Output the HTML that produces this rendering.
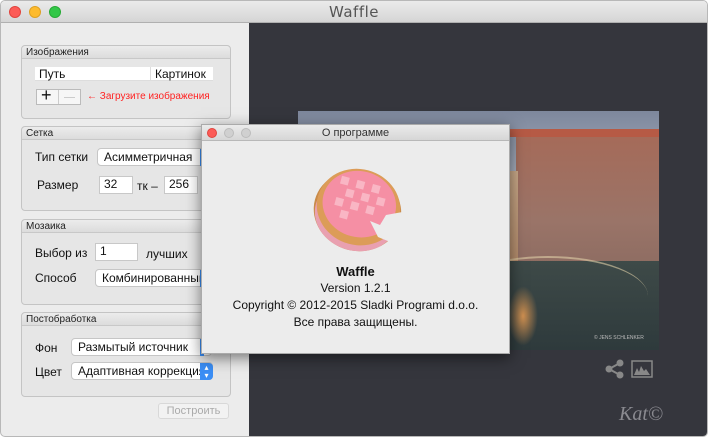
<!DOCTYPE html>
<html><head><meta charset="utf-8"><style>
*{margin:0;padding:0;box-sizing:border-box}
body{width:710px;height:439px;overflow:hidden;background:#fff;font-family:"Liberation Sans",sans-serif;position:relative}
.win{position:absolute;left:0;top:0;width:708px;height:437px;border:1px solid #b8b8b8;border-radius:5px;overflow:hidden;background:#ececec}
.tb{position:absolute;left:0;top:0;width:100%;height:22px;background:linear-gradient(#ebebeb,#d5d5d5);border-bottom:1px solid #b0b0b0;text-align:center;font:15px "DejaVu Sans",sans-serif;color:#555;line-height:22px;letter-spacing:.5px}
.dot{position:absolute;top:5px;width:12px;height:12px;border-radius:50%}
.dark{position:absolute;left:248px;top:22px;width:458px;height:414px;background:#35363d}
.grp{position:absolute;left:20px;width:210px;border:1px solid #c4c4c4;border-radius:4px;background:#e6e6e6}
.gh{height:13px;background:linear-gradient(#ececec,#dcdcdc);border-bottom:1px solid #c8c8c8;font-size:10px;line-height:13px;padding-left:4px;color:#222;border-radius:4px 4px 0 0}
.t{position:absolute;font-size:12px;color:#111;white-space:nowrap}
.in{position:absolute;background:#fff;border:1px solid #c8c8c8;font-size:12px;padding-left:4px;line-height:15px;height:18px;color:#111}
.pop{position:absolute;background:#fff;border:1px solid #c6c6c6;border-radius:4px;font-size:12px;padding-left:6px;line-height:16px;height:18px;color:#111;overflow:hidden;white-space:nowrap}
.dlg{position:absolute;left:200px;top:123px;width:309px;height:230px;background:#ececec;border:1px solid #aaa;box-shadow:0 4px 14px rgba(0,0,0,.5)}
.dtb{height:16px;background:linear-gradient(#ebebeb,#d6d6d6);border-bottom:1px solid #b8b8b8;text-align:center;font-size:11px;line-height:16px;color:#333}
.dd{position:absolute;top:3px;width:10px;height:10px;border-radius:50%;background:#d0d0d0;border:1px solid #bcbcbc}
.c{position:absolute;left:0;width:100%;text-align:center;font-size:12px;color:#111}
</style></head><body>
<div class="win">
<div class="tb">Waffle</div>
<div class="dot" style="left:8px;background:#fc5b57;border:1px solid #e0443e"></div>
<div class="dot" style="left:28px;background:#fdbb2e;border:1px solid #dea123"></div>
<div class="dot" style="left:48px;background:#33c748;border:1px solid #27aa35"></div>
<div class="dark">
 <div style="position:absolute;left:49px;top:88px;width:361px;height:239px;overflow:hidden;background:linear-gradient(180deg,#7d879c 0%,#a3abba 25%,#8c93a0 45%,#4a4f52 62%,#3b4a4c 100%)">
  <div style="position:absolute;left:218px;top:20px;width:143px;height:150px;background:linear-gradient(#a66a58,#9a7468 60%,#8a6a60)"></div>
  <div style="position:absolute;left:212px;top:18px;width:149px;height:8px;background:#b65a45"></div>
  <div style="position:absolute;left:175px;top:60px;width:45px;height:95px;background:linear-gradient(#c8a888,#b08868)"></div>
  <div style="position:absolute;left:145px;top:45px;width:35px;height:110px;background:linear-gradient(#c9a070,#9a6a3a)"></div>
  <div style="position:absolute;left:210px;top:150px;width:151px;height:89px;background:linear-gradient(#3e4a48,#2e3a3c)"></div>
  <div style="position:absolute;left:210px;top:175px;width:30px;height:60px;background:radial-gradient(#d09050,transparent 70%)"></div>
  <div style="position:absolute;left:150px;top:145px;width:200px;height:80px;border-top:2px solid #e0d0a8;border-radius:50% 50% 0 0;opacity:.6"></div>
  <div style="position:absolute;left:296px;top:224px;font-size:5px;color:#bbb">© JENS SCHLENKER</div>
 </div>
 <svg style="position:absolute;left:356px;top:336px" width="20" height="20" viewBox="0 0 20 20"><g stroke="#888" stroke-width="2" fill="#888"><line x1="4" y1="10" x2="15" y2="4"/><line x1="4" y1="10" x2="15" y2="16"/><circle cx="4" cy="10" r="2.5"/><circle cx="15" cy="4" r="2.5"/><circle cx="15" cy="16" r="2.5"/></g></svg>
 <svg style="position:absolute;left:382px;top:337px" width="22" height="18" viewBox="0 0 22 18"><rect x="1" y="1" width="20" height="16" fill="none" stroke="#888" stroke-width="1.5"/><path d="M3 15 L6 8 L8 12 L10 6 L13 11 L15 9 L19 15Z" fill="#888"/></svg>
 <div style="position:absolute;left:370px;top:380px;font:italic 20px 'Liberation Serif',serif;color:#8a8a90">Kat©</div>
</div>

<div class="grp" style="top:44px;height:74px"><div class="gh">Изображения</div></div>
<div style="position:absolute;left:34px;top:66px;width:178px;height:14px;background:#fff;border-bottom:1px solid #ddd"></div>
<div class="t" style="left:38px;top:66px">Путь</div>
<div style="position:absolute;left:149px;top:66px;width:1px;height:13px;background:#ddd"></div>
<div class="t" style="left:154px;top:66px">Картинок</div>
<div style="position:absolute;left:35px;top:88px;width:45px;height:16px;border:1px solid #bbb;background:#f6f6f6"></div>
<div style="position:absolute;left:57px;top:89px;width:1px;height:14px;background:#ccc"></div>
<div class="t" style="left:40px;top:84px;font-size:18px">+</div>
<div style="position:absolute;left:63px;top:96px;width:11px;height:1px;background:#ccc"></div>
<div class="t" style="left:86px;top:90px;font-size:10px;color:#f22">&#x2190; Загрузите изображения</div>

<div class="grp" style="top:125px;height:85px"><div class="gh">Сетка</div></div>
<div class="t" style="left:34px;top:149px">Тип сетки</div>
<div class="pop" style="left:96px;top:147px;width:110px">Асимметричная</div>
<div style="position:absolute;left:199px;top:148px;width:4px;height:17px;background:#3b8ef5"></div>
<div class="t" style="left:36px;top:177px">Размер</div>
<div class="in" style="left:98px;top:175px;width:34px">32</div>
<div class="t" style="left:136px;top:178px">тк –</div>
<div class="in" style="left:163px;top:175px;width:34px">256</div>

<div class="grp" style="top:218px;height:86px"><div class="gh">Мозаика</div></div>
<div class="t" style="left:34px;top:245px">Выбор из</div>
<div class="in" style="left:94px;top:242px;width:43px">1</div>
<div class="t" style="left:145px;top:246px">лучших</div>
<div class="t" style="left:34px;top:270px">Способ</div>
<div class="pop" style="left:94px;top:268px;width:112px">Комбинированный</div>
<div style="position:absolute;left:199px;top:269px;width:4px;height:17px;background:#3b8ef5"></div>

<div class="grp" style="top:311px;height:85px"><div class="gh">Постобработка</div></div>
<div class="t" style="left:34px;top:340px">Фон</div>
<div class="pop" style="left:70px;top:337px;width:141px">Размытый источник</div>
<div style="position:absolute;left:199px;top:338px;width:4px;height:17px;background:#3b8ef5"></div>
<div class="t" style="left:34px;top:364px">Цвет</div>
<div class="pop" style="left:70px;top:361px;width:142px">Адаптивная коррекция</div>
<div style="position:absolute;left:199px;top:362px;width:13px;height:17px;background:#3b8ef5;border-radius:0 4px 4px 0;color:#fff;font-size:8px;text-align:center;line-height:8px;padding-top:1px">▴<br>▾</div>
<div style="position:absolute;left:157px;top:402px;width:71px;height:16px;border:1px solid #d8d8d8;border-radius:3px;background:#f2f2f2;font-size:11px;color:#aaa;text-align:center;line-height:14px">Построить</div>

<div class="dlg">
 <div class="dtb">О программе</div>
 <div class="dd" style="left:5px;background:#fc5b57;border-color:#e0443e"></div>
 <div class="dd" style="left:22px"></div>
 <div class="dd" style="left:39px"></div>
 <svg style="position:absolute;left:106px;top:34px" width="100" height="100" viewBox="0 0 100 100">
  <g transform="rotate(15 50 50)">
  <ellipse cx="50" cy="52" rx="44" ry="40" fill="#c98a48"/>
  <ellipse cx="50" cy="56" rx="42" ry="36" fill="#e9a0b0"/>
  <ellipse cx="50" cy="48" rx="42" ry="38" fill="#dc9c58"/>
  <ellipse cx="50" cy="45" rx="37" ry="33" fill="#f58fa4"/>
  <g fill="#fbc0cc" opacity=".8"><rect x="26" y="22" width="8" height="8"/><rect x="42" y="22" width="8" height="8"/><rect x="58" y="22" width="8" height="8"/><rect x="34" y="33" width="8" height="8"/><rect x="50" y="33" width="8" height="8"/><rect x="66" y="33" width="8" height="8"/><rect x="26" y="44" width="8" height="8"/><rect x="42" y="44" width="8" height="8"/><rect x="58" y="44" width="8" height="8"/><rect x="34" y="55" width="8" height="8"/></g>
  </g>
  <path d="M100 52 L78 56 L72 66 L62 62 L70 78 L100 90Z" fill="#ececec"/>
 </svg>
 <div class="c" style="top:139px;font-weight:bold;font-size:13px">Waffle</div>
 <div class="c" style="top:156px">Version 1.2.1</div>
 <div class="c" style="top:173px">Copyright © 2012-2015 Sladki Programi d.o.o.</div>
 <div class="c" style="top:190px">Все права защищены.</div>
</div>
</div>
</body></html>
